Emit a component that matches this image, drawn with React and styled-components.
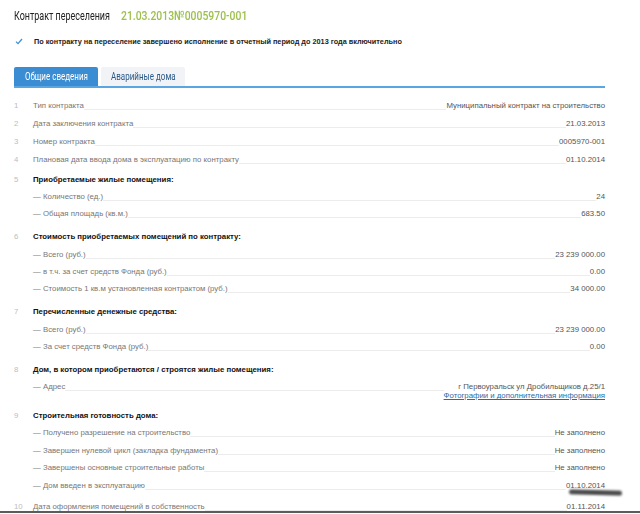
import React from "react";
import styled, { createGlobalStyle } from "styled-components";

const Global = createGlobalStyle`
  html, body { margin: 0; padding: 0; background: #fff; }
  body { font-family: "Liberation Sans", Arial, sans-serif; }
`;

const Page = styled.div`
  position: relative;
  width: 640px;
  height: 513px;
  box-sizing: border-box;
  border-bottom: 2px solid #5c5c5c;
  overflow: hidden;
  background: #fff;
`;

const Content = styled.div`
  width: 591px;
  padding-left: 14px;
`;

const Header = styled.div`
  height: 30px;
  display: flex;
  align-items: center;
  gap: 12px;
`;

const Narrow = styled.span`
  display: inline-block;
  white-space: nowrap;
  font-family: "Roboto", sans-serif;
  font-size: 13px;
  width: ${(p) => p.$w}px;
  transform: scaleX(${(p) => p.$s});
  transform-origin: left center;
  margin-right: ${(p) => -p.$w * (1 - p.$s)}px;
`;

const Title = styled.h1`
  margin: 0;
  font-size: 13px;
  font-weight: normal;
  color: #222;
`;

const DateNo = styled.span`
  font-weight: 500;
  color: #9cc04c;
`;

const Notice = styled.div`
  display: flex;
  align-items: center;
  height: 22px;
  font-size: 7.3px;
  font-weight: bold;
  color: #222;
`;

const Check = styled.span`
  display: inline-flex;
  width: 19px;
  padding-left: 1px;
`;

const Tabs = styled.div`
  display: flex;
  gap: 3px;
  margin-top: 15px;
  border-bottom: 2px solid #5aa6e2;
`;

const Tab = styled.div`
  width: 84px;
  height: 19px;
  display: flex;
  align-items: center;
  justify-content: center;
  border-radius: 2px 2px 0 0;
  font-size: 10px;
  background: ${(p) => (p.$active ? "#3b8dd3" : "#f1f3f6")};
  color: ${(p) => (p.$active ? "#fff" : "#2b5a8a")};
`;

const TabText = styled.span`
  display: inline-block;
  font-family: "Roboto", sans-serif;
  white-space: nowrap;
  transform: scaleX(0.8);
`;

const List = styled.div`
  padding-top: 8px;
  font-size: 7.8px;
`;

const Group = styled.div`
  padding: 2px 0 3px;
`;

const Row = styled.div`
  display: flex;
  align-items: ${(p) => (p.$top ? "flex-start" : "center")};
  height: ${(p) => p.$h || 17}px;
  box-sizing: border-box;
  padding-top: ${(p) => p.$pt || 0}px;
`;

const Num = styled.span`
  width: 19px;
  flex: none;
  color: #bdbdbd;
`;

const Label = styled.span`
  color: #777;
  white-space: nowrap;
`;

const GroupTitle = styled.span`
  color: #111;
  font-weight: bold;
  white-space: nowrap;
`;

const Leader = styled.span`
  flex: 1;
  height: 1px;
  background: #ececec;
  margin-top: ${(p) => p.$mt ?? 8}px;
`;

const Value = styled.span`
  color: #555;
  white-space: nowrap;
  text-align: right;
`;

const ValueStack = styled.div`
  display: flex;
  flex-direction: column;
  align-items: flex-end;
  line-height: 9px;
`;

const Link = styled.a`
  color: #2c6ba5;
  text-decoration: underline;
`;

const Smudge = styled.div`
  position: absolute;
  left: 569px;
  top: 490px;
  width: 53px;
  height: 5px;
  border-radius: 3px;
  background: #4a4a4a;
  filter: blur(1px);
  transform: rotate(1.5deg);
`;

const simple = [
  ["1", "Тип контракта", "Муниципальный контракт на строительство"],
  ["2", "Дата заключения контракта", "21.03.2013"],
  ["3", "Номер контракта", "0005970-001"],
  ["4", "Плановая дата ввода дома в эксплуатацию по контракту", "01.10.2014"],
];

const groups = [
  {
    n: "5",
    title: "Приобретаемые жилые помещения:",
    rows: [
      ["— Количество (ед.)", "24"],
      ["— Общая площадь (кв.м.)", "683.50"],
    ],
  },
  {
    n: "6",
    title: "Стоимость приобретаемых помещений по контракту:",
    rows: [
      ["— Всего (руб.)", "23 239 000.00"],
      ["— в т.ч. за счет средств Фонда (руб.)", "0.00"],
      ["— Стоимость 1 кв.м установленная контрактом (руб.)", "34 000.00"],
    ],
  },
  {
    n: "7",
    title: "Перечисленные денежные средства:",
    rows: [
      ["— Всего (руб.)", "23 239 000.00"],
      ["— За счет средств Фонда (руб.)", "0.00"],
    ],
  },
];

const ready = [
  ["— Получено разрешение на строительство", "Не заполнено"],
  ["— Завершен нулевой цикл (закладка фундамента)", "Не заполнено"],
  ["— Завершены основные строительные работы", "Не заполнено"],
  ["— Дом введен в эксплуатацию", "01.10.2014"],
];

function DataRow({ n = "", label, value, h = 17 }) {
  return (
    <Row $h={h}>
      <Num>{n}</Num>
      <Label>{label}</Label>
      <Leader />
      <Value>{value}</Value>
    </Row>
  );
}

function GroupHead({ n, title }) {
  return (
    <Row $h={18}>
      <Num>{n}</Num>
      <GroupTitle>{title}</GroupTitle>
    </Row>
  );
}

export default function App() {
  return (
    <Page>
      <Global />
      <Content>
        <Header>
          <Narrow $w={138} $s={0.69}>
            <Title>Контракт переселения</Title>
          </Narrow>
          <Narrow $w={160} $s={0.8}>
            <DateNo>21.03.2013№0005970-001</DateNo>
          </Narrow>
        </Header>
        <Notice>
          <Check>
            <svg width="8" height="7" viewBox="0 0 8 7">
              <path d="M1 3.6 L3 5.6 L7 1" fill="none" stroke="#3f8fd2" strokeWidth="1.3" />
            </svg>
          </Check>
          По контракту на переселение завершено исполнение в отчетный период до 2013 года включительно
        </Notice>
        <Tabs>
          <Tab $active><TabText>Общие сведения</TabText></Tab>
          <Tab><TabText>Аварийные дома</TabText></Tab>
        </Tabs>
        <List>
          {simple.map(([n, l, v]) => (
            <DataRow key={n} n={n} label={l} value={v} h={18} />
          ))}
          {groups.map((g) => (
            <Group key={g.n}>
              <GroupHead n={g.n} title={g.title} />
              {g.rows.map(([l, v]) => (
                <DataRow key={l} label={l} value={v} h={17.3} />
              ))}
            </Group>
          ))}
          <Group>
            <GroupHead n="8" title="Дом, в котором приобретаются / строятся жилые помещения:" />
            <Row $h={23} $top $pt={4}>
              <Num />
              <Label>— Адрес</Label>
              <Leader $mt={8} />
              <ValueStack>
                <Value>г Первоуральск ул Дробильщиков д.25/1</Value>
                <Link href="#">Фотографии и дополнительная информация</Link>
              </ValueStack>
            </Row>
          </Group>
          <Group>
            <GroupHead n="9" title="Строительная готовность дома:" />
            {ready.map(([l, v]) => (
              <DataRow key={l} label={l} value={v} h={17.5} />
            ))}
          </Group>
          <DataRow n="10" label="Дата оформления помещений в собственность" value="01.11.2014" h={19} />
        </List>
      </Content>
      <Smudge />
    </Page>
  );
}
